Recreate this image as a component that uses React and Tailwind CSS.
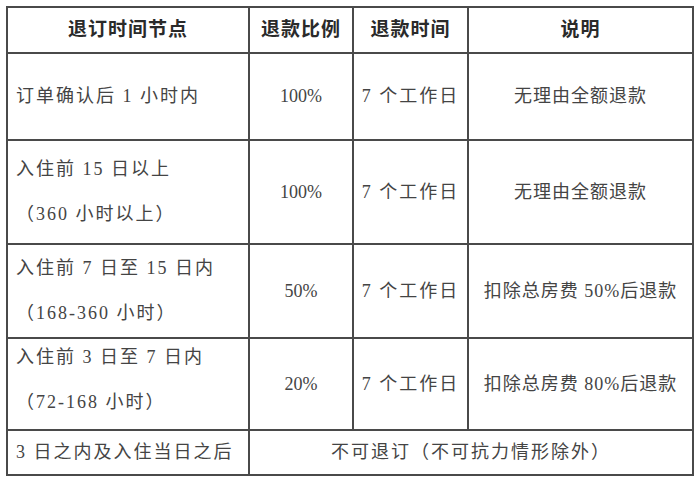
import React from "react";

const rows = [
  {
    when: ["订单确认后 1 小时内"],
    rate: "100%",
    time: "7 个工作日",
    note: "无理由全额退款",
  },
  {
    when: ["入住前 15 日以上", "（360 小时以上）"],
    rate: "100%",
    time: "7 个工作日",
    note: "无理由全额退款",
  },
  {
    when: ["入住前 7 日至 15 日内", "（168-360 小时）"],
    rate: "50%",
    time: "7 个工作日",
    note: "扣除总房费 50%后退款",
  },
  {
    when: ["入住前 3 日至 7 日内", "（72-168 小时）"],
    rate: "20%",
    time: "7 个工作日",
    note: "扣除总房费 80%后退款",
    up: true,
  },
];

const cell = "border-r-2 border-b-2 border-[#4a4a4a] flex items-center";

export default function App() {
  return (
    <div
      className="w-[700px] h-[483px] bg-white pt-[6px] pl-[6px]"
      style={{ fontFamily: '"Liberation Serif", "Noto Sans CJK SC", serif' }}
    >
      <div className="w-[688px] grid grid-cols-[242px_104px_115px_225px] grid-rows-[46px_87px_104px_94px_92px_45px] border-t-2 border-l-2 border-[#4a4a4a] text-[18px] tracking-[2px] text-[#444]">
        {/* header */}
        {["退订时间节点", "退款比例", "退款时间", "说明"].map((h) => (
          <div key={h} className={`${cell} justify-center text-[19px] font-bold text-[#2a2a2a] tracking-[1px]`}>
            {h}
          </div>
        ))}

        {rows.map((r, i) => (
          <React.Fragment key={i}>
            <div className={`${cell} justify-start pl-[8px] ${r.up ? "pb-[8px]" : ""}`}>
              <div className="flex flex-col leading-[45px]">
                {r.when.map((w) => (
                  <span key={w}>{w}</span>
                ))}
              </div>
            </div>
            <div className={`${cell} justify-center tracking-normal`}>{r.rate}</div>
            <div className={`${cell} justify-center`}>{r.time}</div>
            <div className={`${cell} justify-center tracking-[1px]`}>{r.note}</div>
          </React.Fragment>
        ))}

        <div className={`${cell} justify-start pl-[8px]`}>3 日之内及入住当日之后</div>
        <div className={`${cell} col-span-3 justify-center`}>不可退订（不可抗力情形除外）</div>
      </div>
    </div>
  );
}
